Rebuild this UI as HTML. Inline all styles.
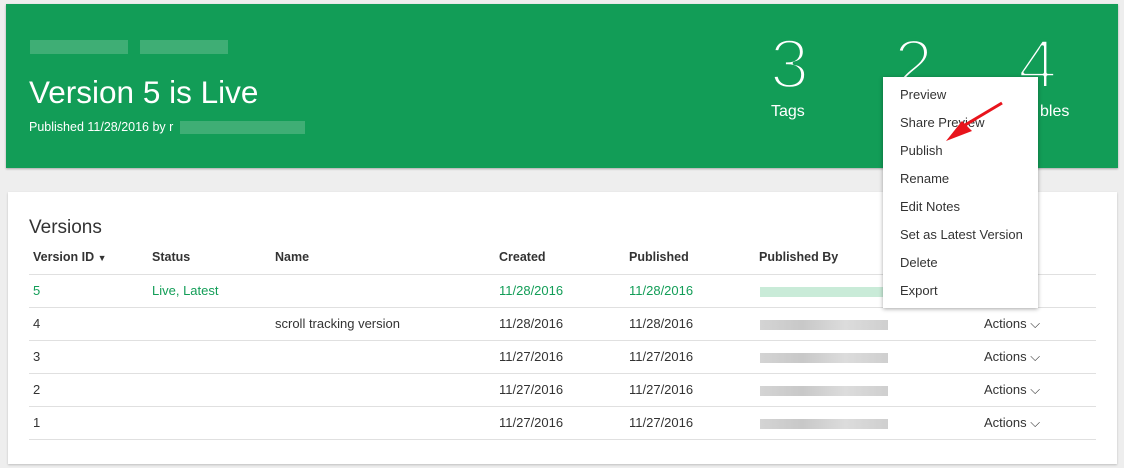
<!DOCTYPE html>
<html><head><style>
body{margin:0;width:1124px;height:468px;background:#eeeeee;font-family:"Liberation Sans",sans-serif;position:relative;overflow:hidden}
.a{position:absolute}
.hdr{left:6px;top:4px;width:1112px;height:164px;background:#129d57;box-shadow:0 1px 2px rgba(0,0,0,.3)}
.w{color:#fff}
.card{left:8px;top:192px;width:1109px;height:272px;background:#fff;box-shadow:0 1px 2px rgba(0,0,0,.2)}
.t{font-size:13px;color:#333}
.th{font-size:12.5px;font-weight:bold;color:#333}
.g{color:#129d57}
.line{left:29px;width:1067px;height:1px;background:#e0e0e0}
.blur{height:10px;background:linear-gradient(90deg,#d4d4d4,#c8c8c8,#dcdcdc,#cfcfcf)}
.menu{left:883px;top:77px;width:155px;height:231px;background:#fff;box-shadow:0 1px 4px rgba(0,0,0,.35)}
.mi{left:17px;font-size:13px;color:#333}
</style></head><body>
<div class="a hdr"></div>
<div class="a" style="left:30px;top:40px;width:98px;height:14px;background:#3fae75"></div>
<div class="a" style="left:140px;top:40px;width:88px;height:14px;background:#3fae75"></div>
<div class="a w" style="left:29px;top:74px;font-size:31.5px">Version 5 is Live</div>
<div class="a w" style="left:29px;top:120px;font-size:12.5px">Published 11/28/2016 by r</div>
<div class="a" style="left:180px;top:121px;width:125px;height:13px;background:#3fae75"></div>
<svg class="a" style="left:0;top:0" width="1124" height="170">
<g font-family="Liberation Sans" font-size="70" fill="#fff" stroke="#129d57" stroke-width="3.4" stroke-linejoin="round">
<text x="770" y="88">3</text><text x="894" y="88">2</text><text x="1018" y="88">4</text>
</g></svg>
<div class="a w" style="left:771px;top:103px;font-size:16px">Tags</div>
<div class="a w" style="left:1040px;top:103px;font-size:16px">bles</div>

<div class="a card"></div>
<div class="a" style="left:29px;top:217px;font-size:19px;color:#333">Versions</div>
<div class="a th" style="left:33px;top:250px">Version ID <span style="font-size:9px">▼</span></div>
<div class="a th" style="left:152px;top:250px">Status</div>
<div class="a th" style="left:275px;top:250px">Name</div>
<div class="a th" style="left:499px;top:250px">Created</div>
<div class="a th" style="left:629px;top:250px">Published</div>
<div class="a th" style="left:759px;top:250px">Published By</div>
<div class="a line" style="top:274px"></div>
<div class="a line" style="top:307px"></div>
<div class="a line" style="top:340px"></div>
<div class="a line" style="top:373px"></div>
<div class="a line" style="top:406px"></div>
<div class="a line" style="top:439px"></div>

<div class="a t g" style="left:33px;top:283px">5</div>
<div class="a t g" style="left:152px;top:283px">Live, Latest</div>
<div class="a t g" style="left:499px;top:283px">11/28/2016</div>
<div class="a t g" style="left:629px;top:283px">11/28/2016</div>
<div class="a blur" style="left:760px;top:287px;width:125px;background:#c9ebd8"></div>

<div class="a t" style="left:33px;top:316px">4</div>
<div class="a t" style="left:275px;top:316px">scroll tracking version</div>
<div class="a t" style="left:499px;top:316px">11/28/2016</div>
<div class="a t" style="left:629px;top:316px">11/28/2016</div>
<div class="a blur" style="left:760px;top:320px;width:128px"></div>
<div class="a t" style="left:984px;top:316px">Actions ⌵</div>

<div class="a t" style="left:33px;top:349px">3</div>
<div class="a t" style="left:499px;top:349px">11/27/2016</div>
<div class="a t" style="left:629px;top:349px">11/27/2016</div>
<div class="a blur" style="left:760px;top:353px;width:128px"></div>
<div class="a t" style="left:984px;top:349px">Actions ⌵</div>

<div class="a t" style="left:33px;top:382px">2</div>
<div class="a t" style="left:499px;top:382px">11/27/2016</div>
<div class="a t" style="left:629px;top:382px">11/27/2016</div>
<div class="a blur" style="left:760px;top:386px;width:128px"></div>
<div class="a t" style="left:984px;top:382px">Actions ⌵</div>

<div class="a t" style="left:33px;top:415px">1</div>
<div class="a t" style="left:499px;top:415px">11/27/2016</div>
<div class="a t" style="left:629px;top:415px">11/27/2016</div>
<div class="a blur" style="left:760px;top:419px;width:128px"></div>
<div class="a t" style="left:984px;top:415px">Actions ⌵</div>

<div class="a menu">
<div class="a mi" style="top:10px">Preview</div>
<div class="a mi" style="top:38px">Share Preview</div>
<div class="a mi" style="top:66px">Publish</div>
<div class="a mi" style="top:94px">Rename</div>
<div class="a mi" style="top:122px">Edit Notes</div>
<div class="a mi" style="top:150px">Set as Latest Version</div>
<div class="a mi" style="top:178px">Delete</div>
<div class="a mi" style="top:206px">Export</div>
</div>
<svg class="a" style="left:0;top:0" width="1124" height="468">
<path d="M1002,103 L960,128" stroke="#e8141c" stroke-width="3"/>
<polygon points="946,141 962,121 972,131" fill="#e8141c"/>
</svg>
</body></html>
